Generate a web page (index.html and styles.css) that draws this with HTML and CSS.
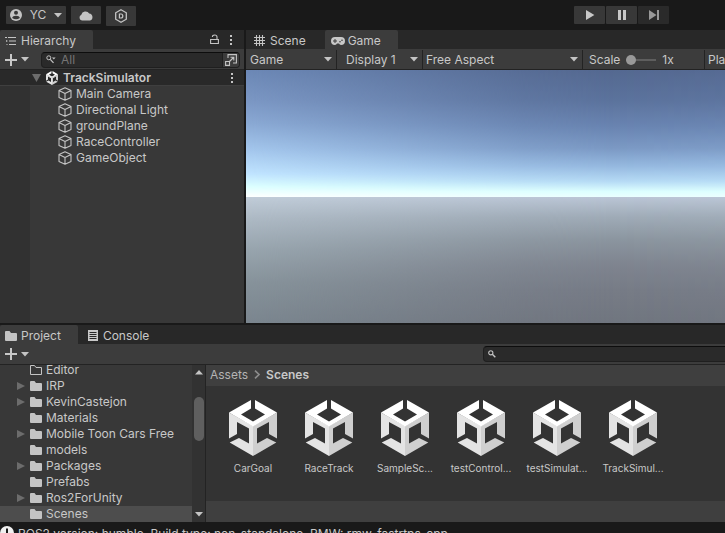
FILE: index.html
```html
<!DOCTYPE html>
<html lang="en">
<head>
<meta charset="utf-8">
<title>TrackSimulator</title>
<link rel="stylesheet" href="styles.css">
</head>
<body>
<svg class="defs" aria-hidden="true">
  <symbol id="cube" viewBox="0 0 48 56">
    <path fill="#e4e4e4" d="M0 12.5V38.5L8 34V22L20 28.5V43.5L10 38L.7 42.5L24 56V26Z"/>
    <path fill="#cfcfcf" d="M48 12.5V38.5L40 34V22L28 28.5V43.5L38 38L47.3 42.5L24 56V26Z"/>
    <path fill="#fff" d="M22 0L0 12.5L24 26.5L48 12.5L26 0V8.5L36 14.5L24 21.5L12 14.5L22 8.5Z"/>
  </symbol>
  <symbol id="object" viewBox="0 0 14 14">
    <path fill="none" stroke="#c4c4c4" stroke-width="1.1" stroke-linejoin="round" d="M7 .7L13 3.6V10.4L7 13.3L1 10.4V3.6ZM1 3.6L7 6.6L13 3.6M7 6.6V13.3"/>
  </symbol>
  <symbol id="folder" viewBox="0 0 12 10"><path fill="#c4c4c4" d="M0 1Q0 0 1 0H4.5L6 2H11Q12 2 12 3V9Q12 10 11 10H1Q0 10 0 9Z"/></symbol>
  <symbol id="folder-open" viewBox="0 0 12 10"><path fill="none" stroke="#c4c4c4" d="M.5 9.5V.5H4.5L6 2.5H11.5V9.5Z"/></symbol>
  <symbol id="down" viewBox="0 0 8 5"><path fill="#c4c4c4" d="M0 0H8L4 4.6Z"/></symbol>
  <symbol id="right" viewBox="0 0 8 8"><path fill="#6c6c6c" d="M0 0L8 4L0 8Z"/></symbol>
  <symbol id="plus" viewBox="0 0 12 12"><path stroke="#c8c8c8" stroke-width="2" d="M6 0V12M0 6H12"/></symbol>
  <symbol id="dots" viewBox="0 0 4 12"><path fill="#c4c4c4" d="M1 1H3V3H1ZM1 5H3V7H1ZM1 9H3V11H1Z"/></symbol>
</svg>

<header class="topbar">
  <div class="account">
    <button class="tool account-btn" aria-label="Account YC">
      <svg width="12" height="12" viewBox="0 0 12 12"><circle cx="6" cy="6" r="6" fill="#c4c4c4"/><circle cx="6" cy="3.8" r="2" fill="#383838"/><path fill="#383838" d="M2.2 9Q2.6 6.8 6 6.8T9.8 9Q8 10.2 6 10.2T2.2 9Z"/></svg>
      <span>YC</span>
      <svg width="8" height="5"><use href="#down"/></svg>
    </button>
    <button class="tool" aria-label="Cloud">
      <svg width="14" height="11" viewBox="0 0 14 11"><path fill="#c4c4c4" d="M3 10.5A3 3 0 0 1 2.3 4.8A4.3 4.3 0 0 1 10.2 3.5A3.6 3.6 0 0 1 11 10.5Z"/></svg>
    </button>
    <button class="tool tall" aria-label="Package services">
      <svg width="12" height="14" viewBox="0 0 12 14"><path fill="none" stroke="#c4c4c4" stroke-width="1.3" d="M6 .8L11.3 3.8V10.2L6 13.2L.7 10.2V3.8Z"/><path fill="none" stroke="#c4c4c4" stroke-width="1.2" d="M4.4 5H6Q7.8 5 7.8 7T6 9H4.4Z"/></svg>
    </button>
  </div>
  <div class="playback">
    <button class="tool" aria-label="Play"><svg width="10" height="10" viewBox="0 0 10 10"><path fill="#c8c8c8" d="M1 0L9.4 5L1 10Z"/></svg></button>
    <button class="tool" aria-label="Pause"><svg width="10" height="10" viewBox="0 0 10 10"><path fill="#c8c8c8" d="M1 0H4V10H1ZM6 0H9V10H6Z"/></svg></button>
    <button class="tool dim" aria-label="Step"><svg width="10" height="10" viewBox="0 0 10 10"><path fill="#999" d="M0 0L7.5 5L0 10ZM8 0H10V10H8Z"/></svg></button>
  </div>
</header>

<main class="workspace">
  <section class="panel hierarchy">
    <div class="tabs">
      <button class="tab active">
        <svg width="11" height="10" viewBox="0 0 11 10"><path stroke="#c4c4c4" fill="none" d="M3 1.5H11M4 5H11M4 8.5H11M0 1.5H2M1.5 4.5V5.5M2.5 5H1M1.5 8.5H2.5"/></svg>
        <span>Hierarchy</span>
      </button>
      <div class="tab-actions">
        <button class="bare" aria-label="Lock"><svg width="9" height="11" viewBox="0 0 9 11"><path fill="none" stroke="#c4c4c4" stroke-width="1.1" d="M.6 5.5H8.4V9.5H.6ZM7 5.5V3Q7 1 4.7 1T2.4 3"/></svg></button>
        <button class="bare" aria-label="Panel menu"><svg width="4" height="12"><use href="#dots"/></svg></button>
      </div>
    </div>
    <div class="toolbar">
      <button class="bare add" aria-label="Create"><svg width="12" height="12"><use href="#plus"/></svg><svg width="8" height="5"><use href="#down"/></svg></button>
      <div class="search with-picker">
        <svg width="10" height="9" viewBox="0 0 10 9"><circle cx="2.8" cy="2.8" r="2" fill="none" stroke="#c4c4c4"/><path stroke="#c4c4c4" stroke-width="1.2" d="M4.3 4.3L7.5 7.8"/><path fill="#c4c4c4" d="M6 2.5H9.6L7.8 4.5Z"/></svg>
        <input type="text" placeholder="All" aria-label="Search hierarchy">
        <button class="bare picker" aria-label="Open search window"><svg width="12" height="12" viewBox="0 0 12 12"><path fill="none" stroke="#c4c4c4" stroke-width="1.1" d="M3 4V.6H11.4V9H8M.6 7.5H4.5V11.4H.6ZM4.5 7.5L8.5 3.5M5.5 3.2H8.8V6.5"/></svg></button>
      </div>
    </div>
    <div class="scene-row">
      <svg width="9" height="8" viewBox="0 0 9 8"><path fill="#6c6c6c" d="M0 0H9L4.5 8Z"/></svg>
      <svg width="12" height="14"><use href="#cube"/></svg>
      <strong>TrackSimulator</strong>
      <button class="bare" aria-label="Scene menu"><svg width="4" height="12"><use href="#dots"/></svg></button>
    </div>
    <ul class="objects">
      <li><svg width="14" height="14"><use href="#object"/></svg>Main Camera</li>
      <li><svg width="14" height="14"><use href="#object"/></svg>Directional Light</li>
      <li><svg width="14" height="14"><use href="#object"/></svg>groundPlane</li>
      <li><svg width="14" height="14"><use href="#object"/></svg>RaceController</li>
      <li><svg width="14" height="14"><use href="#object"/></svg>GameObject</li>
    </ul>
  </section>

  <section class="panel game">
    <div class="tabs">
      <button class="tab scene-tab">
        <svg width="11" height="11" viewBox="0 0 11 11"><path stroke="#c4c4c4" stroke-width="1.1" d="M2.5 0V11M5.5 0V11M8.5 0V11M0 2.5H11M0 5.5H11M0 8.5H11"/></svg>
        <span>Scene</span>
      </button>
      <button class="tab game-tab active">
        <svg width="14" height="8" viewBox="0 0 14 8"><path fill="#c8c8c8" d="M4 0H10A4 4 0 0 1 10 8Q8.6 8 8 6.6H6Q5.4 8 4 8A4 4 0 0 1 4 0Z"/><path stroke="#3c3c3c" d="M4 2V6M2 4H6"/><circle cx="9" cy="4.8" r=".8" fill="#3c3c3c"/><circle cx="11" cy="3.2" r=".8" fill="#3c3c3c"/></svg>
        <span>Game</span>
      </button>
    </div>
    <div class="toolbar options">
      <div class="drop mode"><select aria-label="View"><option>Game</option><option>Simulator</option></select><svg width="8" height="5"><use href="#down"/></svg></div>
      <div class="drop display"><select aria-label="Display"><option>Display 1</option><option>Display 2</option></select><svg width="8" height="5"><use href="#down"/></svg></div>
      <div class="drop aspect"><select aria-label="Aspect"><option>Free Aspect</option><option>16:9</option></select><svg width="8" height="5"><use href="#down"/></svg></div>
      <div class="scale"><label for="scale">Scale</label><input id="scale" type="range" min="1" max="5" value="1"><output for="scale">1x</output></div>
      <div class="drop focus"><select aria-label="Play mode"><option>Play Focused</option></select></div>
    </div>
    <div class="viewport"><div class="sunny"></div><div class="shade"></div></div>
  </section>
</main>

<section class="panel project">
  <div class="tabs">
    <button class="tab project-tab active"><svg width="12" height="10"><use href="#folder"/></svg><span>Project</span></button>
    <button class="tab console-tab">
      <svg width="10" height="11" viewBox="0 0 10 11"><path fill="#c8c8c8" d="M0 0H10V11H0Z"/><path stroke="#282828" d="M1.5 2.5H8.5M1.5 4.5H8.5M1.5 6.5H8.5M1.5 8.5H8.5"/></svg>
      <span>Console</span>
    </button>
  </div>
  <div class="toolbar">
    <button class="bare add" aria-label="Create asset"><svg width="12" height="12"><use href="#plus"/></svg><svg width="8" height="5"><use href="#down"/></svg></button>
    <div class="search asset-search">
      <svg width="8" height="8" viewBox="0 0 8 8"><circle cx="2.8" cy="2.8" r="2.1" fill="none" stroke="#c4c4c4" stroke-width="1.1"/><path stroke="#c4c4c4" stroke-width="1.4" d="M4.3 4.3L7.3 7.3"/></svg>
      <input type="text" aria-label="Search assets">
    </div>
  </div>
  <div class="browser">
    <ul class="folders">
      <li><i></i><svg width="12" height="10"><use href="#folder-open"/></svg>Editor</li>
      <li><i><svg width="8" height="8"><use href="#right"/></svg></i><svg width="12" height="10"><use href="#folder"/></svg>IRP</li>
      <li><i><svg width="8" height="8"><use href="#right"/></svg></i><svg width="12" height="10"><use href="#folder"/></svg>KevinCastejon</li>
      <li><i></i><svg width="12" height="10"><use href="#folder"/></svg>Materials</li>
      <li><i><svg width="8" height="8"><use href="#right"/></svg></i><svg width="12" height="10"><use href="#folder"/></svg>Mobile Toon Cars Free</li>
      <li><i></i><svg width="12" height="10"><use href="#folder"/></svg>models</li>
      <li><i><svg width="8" height="8"><use href="#right"/></svg></i><svg width="12" height="10"><use href="#folder"/></svg>Packages</li>
      <li><i></i><svg width="12" height="10"><use href="#folder"/></svg>Prefabs</li>
      <li><i><svg width="8" height="8"><use href="#right"/></svg></i><svg width="12" height="10"><use href="#folder"/></svg>Ros2ForUnity</li>
      <li class="selected"><i></i><svg width="12" height="10"><use href="#folder"/></svg>Scenes</li>
    </ul>
    <div class="scrollbar">
      <svg width="8" height="5" viewBox="0 0 8 5"><path fill="#c4c4c4" d="M4 0L8 4.6H0Z"/></svg>
      <div class="track"><div class="thumb"></div></div>
      <svg width="8" height="5"><use href="#down"/></svg>
    </div>
    <div class="assets">
      <nav class="crumbs"><a href="#assets">Assets</a><svg width="6" height="9" viewBox="0 0 6 9"><path fill="none" stroke="#8c8c8c" stroke-width="1.6" d="M1 .7L5 4.5L1 8.3"/></svg><strong>Scenes</strong></nav>
      <div class="grid">
        <figure><svg width="48" height="56"><use href="#cube"/></svg><figcaption>CarGoal</figcaption></figure>
        <figure><svg width="48" height="56"><use href="#cube"/></svg><figcaption>RaceTrack</figcaption></figure>
        <figure><svg width="48" height="56"><use href="#cube"/></svg><figcaption>SampleSc...</figcaption></figure>
        <figure><svg width="48" height="56"><use href="#cube"/></svg><figcaption>testControl...</figcaption></figure>
        <figure><svg width="48" height="56"><use href="#cube"/></svg><figcaption>testSimulat...</figcaption></figure>
        <figure><svg width="48" height="56"><use href="#cube"/></svg><figcaption>TrackSimul...</figcaption></figure>
      </div>
      <div class="asset-footer"></div>
    </div>
  </div>
</section>

<footer class="status">
  <svg width="14" height="14" viewBox="0 0 14 14"><circle cx="7" cy="7" r="7" fill="#f0f0f0"/><path fill="#191919" d="M6 2.5H8V8H6ZM6 9.5H8V11.5H6Z"/></svg>
  <span>ROS2 version: humble. Build type: non_standalone. RMW: rmw_fastrtps_cpp</span>
</footer>
</body>
</html>
```
FILE: styles.css
```css
* { box-sizing: border-box; }

body {
  margin: 0;
  height: 100vh;
  overflow: hidden;
  display: flex;
  flex-direction: column;
  background: #191919;
  color: #c8c8c8;
  font: 12px/16px Inter, "Liberation Sans", sans-serif;
}

button, input, select { font: inherit; color: inherit; border: 0; padding: 0; margin: 0; background: none; }
svg { display: block; flex: none; }
ul { list-style: none; margin: 0; padding: 0; }
.defs { position: absolute; width: 0; height: 0; }
.bare { display: flex; align-items: center; flex: none; }

/* Top bar */
.topbar { flex: none; height: 30px; display: flex; justify-content: space-between; padding: 6px 56px 0 6px; }
.account { display: flex; align-items: flex-start; gap: 5px; }
.playback { display: flex; gap: 1px; }
.tool { height: 18px; width: 31px; display: flex; align-items: center; justify-content: center; background: #383838; border-radius: 1px; }
.account .tool { width: 30px; }
.account .account-btn { width: 60px; gap: 8px; }
.tool.tall { height: 20px; }
.tool.dim { background: #2a2a2a; }

/* Shared panel chrome */
.workspace { flex: 1; min-height: 0; display: flex; gap: 2px; }
.panel { display: flex; flex-direction: column; min-width: 0; background: #383838; }
.tabs { flex: none; display: flex; height: 19px; background: #282828; }
.tab { display: flex; align-items: center; padding: 2px 17px 0 5px; gap: 5px; }
.tab.active { background: #3c3c3c; border-radius: 2px 2px 0 0; }
.tab-actions { display: flex; gap: 10px; margin-left: auto; padding-right: 11px; }
.toolbar { flex: none; display: flex; align-items: center; height: 21px; background: #3c3c3c; border-bottom: 1px solid #232323; }
.workspace .toolbar { padding-top: 1px; }
.add { gap: 4px; padding-left: 5px; }
.search { display: flex; align-items: center; min-width: 0; height: 16px; gap: 5px; padding-left: 4px; background: #2a2a2a; border: 1px solid #1f1f1f; border-top-color: #0d0d0d; border-radius: 4px; }
.search input { flex: 1; min-width: 0; height: 14px; outline: 0; }
.search input::placeholder { color: #757575; opacity: 1; }

/* Hierarchy */
.hierarchy { flex: none; width: 244px; }
.with-picker { flex: 1; margin: 0 4px 0 12px; }
.picker { width: 17px; height: 14px; justify-content: center; background: #3c3c3c; border-left: 1px solid #1f1f1f; border-radius: 0 3px 3px 0; }
.scene-row { flex: none; display: flex; align-items: center; height: 16px; gap: 5px; padding: 0 10px 0 32px; background: #292929; border-bottom: 1px solid #3f3f3f; }
.scene-row strong { flex: 1; font-weight: 600; }
.objects { flex: 1; background: linear-gradient(90deg, #313131 30px, #383838 30px); }
.objects li { display: flex; align-items: center; gap: 4px; height: 16px; padding-left: 58px; }

/* Game view */
.game { flex: 1; }
.scene-tab { padding: 2px 19px 0 8px; }
.game-tab { padding-left: 6px; gap: 3px; }
.options { overflow: hidden; }
.options > * { flex: none; height: 20px; border-right: 1px solid #232323; }
.drop { display: flex; align-items: center; padding: 0 4px; }
.drop select { flex: 1; min-width: 0; appearance: none; outline: 0; }
.mode { width: 91px; }
.display { width: 86px; padding-left: 9px; }
.aspect { width: 160px; padding-left: 3px; }
.scale { width: 122px; display: flex; align-items: center; gap: 6px; padding-left: 6px; }
.scale input { appearance: none; width: 30px; height: 10px; background: linear-gradient(#5e5e5e, #5e5e5e) center / 100% 2px no-repeat; }
.scale input::-webkit-slider-thumb { appearance: none; width: 10px; height: 10px; border-radius: 50%; background: #999; }
.focus { flex: 1; padding: 0 0 0 3px; border-right: 0; min-width: 0; }
.viewport { flex: 1; display: grid; overflow: hidden; }
.viewport > div { grid-area: 1 / 1; }
.sunny {
  background: linear-gradient(#6c88b6, #7b97c4 12%, #8aa9d4 21%, #a5c8ee 32%, #c0e4ff 41%, #dcffff 46%, #fff 50.3%,
    #c0ccd8 50.3%, #adb9c4 59%, #98a5ae 71%, #87939b 84%, #7b868f);
}
.shade {
  background: linear-gradient(#546890, #5b729c 12%, #6883b0 22%, #7b99c4 31%, #95b8df 38%, #b5daf5 44%, #dcffff 48%, #eaffff 50.3%,
    #bac5d5 50.3%, #9fabb7 58%, #8b959f 67%, #7e848f 77%, #767b86 87%, #70757f);
  mask-image: linear-gradient(90deg, transparent, #0004 18%, #0009 40%, #000d 58%, #000 76%, #000e);
}

/* Project browser */
.project { flex: none; height: 197px; margin-top: 2px; }
.project-tab { gap: 4px; }
.console-tab { padding-left: 10px; }
.asset-search { flex: 1; margin-left: 454px; border-right: 0; border-radius: 4px 0 0 4px; }
.browser { flex: 1; min-height: 0; display: flex; }
.folders { flex: none; width: 192px; display: flex; flex-direction: column; justify-content: flex-end; overflow: hidden; }
.folders li { flex: none; display: flex; align-items: center; height: 16px; gap: 4px; padding-left: 17px; }
.folders i { width: 9px; }
.selected { background: #4d4d4d; }
.scrollbar { flex: none; width: 14px; display: flex; flex-direction: column; align-items: center; gap: 5px; padding: 5px 0; background: #323232; border-right: 1px solid #232323; }
.track { flex: 1; width: 10px; padding-top: 17px; }
.thumb { height: 44px; border-radius: 5px; background: #5f5f5f; }
.assets { flex: 1; min-width: 0; display: flex; flex-direction: column; background: #333; }
.crumbs, .asset-footer { flex: none; height: 21px; background: #3f3f3f; }
.crumbs { display: flex; align-items: center; gap: 6px; padding: 0 0 2px 4px; }
.crumbs a { color: #b4b4b4; text-decoration: none; }
.crumbs strong { font-weight: 600; }
.grid { flex: 1; display: flex; padding: 14px 0 0 9px; overflow: hidden; }
.grid figure { flex: none; width: 76px; margin: 0; display: flex; flex-direction: column; align-items: center; gap: 6px; font-size: 10px; line-height: 12px; }

/* Status line */
.status { flex: none; height: 11px; display: flex; align-items: flex-start; gap: 4px; padding-top: 4px; overflow: hidden; white-space: nowrap; }
```
